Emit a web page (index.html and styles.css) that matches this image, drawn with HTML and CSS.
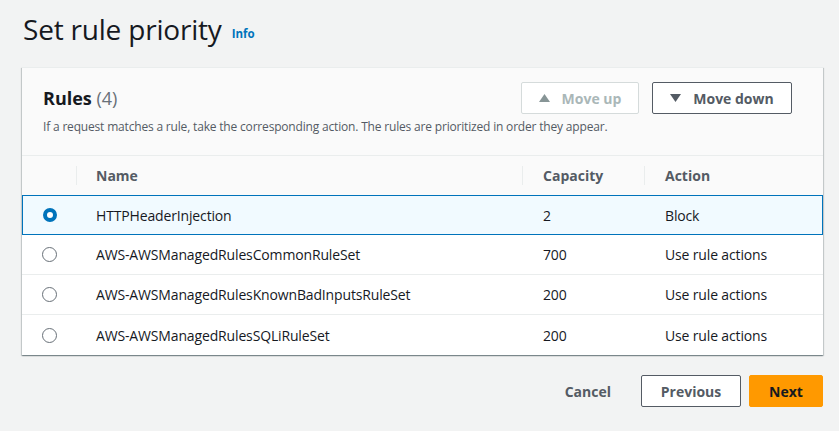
FILE: index.html
```html
<!DOCTYPE html>
<html>
<head>
<meta charset="utf-8">
<link rel="stylesheet" href="styles.css">
</head>
<body>
<div class="page">
  <div class="title-row">
    <h1 class="title">Set rule priority</h1>
    <a class="info">Info</a>
  </div>
  <div class="container">
    <div class="container-header">
      <div class="header-top">
        <h2 class="rules-title">Rules <span class="count">(4)</span></h2>
        <div class="actions">
          <button class="btn btn-disabled"><svg class="tri" width="11" height="8" viewBox="0 0 11 8"><path d="M5.5 0 L11 8 L0 8 Z" fill="currentColor"/></svg>Move up</button>
          <button class="btn btn-normal"><svg class="tri" width="11" height="8" viewBox="0 0 11 8"><path d="M0 0 L11 0 L5.5 8 Z" fill="currentColor"/></svg>Move down</button>
        </div>
      </div>
      <p class="desc">If a request matches a rule, take the corresponding action. The rules are prioritized in order they appear.</p>
    </div>
    <div class="table">
      <div class="row head">
        <div class="cell c-sel"></div>
        <div class="cell c-name sep">Name</div>
        <div class="cell c-cap sep">Capacity</div>
        <div class="cell c-act sep">Action</div>
      </div>
      <div class="row selected">
        <div class="cell c-sel"><span class="radio checked"></span></div>
        <div class="cell c-name">HTTPHeaderInjection</div>
        <div class="cell c-cap">2</div>
        <div class="cell c-act">Block</div>
      </div>
      <div class="row">
        <div class="cell c-sel"><span class="radio"></span></div>
        <div class="cell c-name">AWS-AWSManagedRulesCommonRuleSet</div>
        <div class="cell c-cap">700</div>
        <div class="cell c-act">Use rule actions</div>
      </div>
      <div class="row">
        <div class="cell c-sel"><span class="radio"></span></div>
        <div class="cell c-name">AWS-AWSManagedRulesKnownBadInputsRuleSet</div>
        <div class="cell c-cap">200</div>
        <div class="cell c-act">Use rule actions</div>
      </div>
      <div class="row last">
        <div class="cell c-sel"><span class="radio"></span></div>
        <div class="cell c-name">AWS-AWSManagedRulesSQLiRuleSet</div>
        <div class="cell c-cap">200</div>
        <div class="cell c-act">Use rule actions</div>
      </div>
    </div>
  </div>
  <div class="footer">
    <button class="link-btn">Cancel</button>
    <button class="btn btn-normal prev">Previous</button>
    <button class="btn btn-primary">Next</button>
  </div>
</div>
</body>
</html>
```

FILE: styles.css
```css
* { box-sizing: border-box; }
html, body {
  margin: 0;
  padding: 0;
  background: #f2f3f3;
  font-family: "Open Sans", "Noto Sans", sans-serif;
  color: #16191f;
}
.page {
  padding: 11px 16px 0 22px;
  width: 839px;
}
.title-row {
  display: flex;
  align-items: baseline;
  gap: 10px;
  height: 56px;
  padding-left: 1px;
}
.title {
  margin: 0;
  font-size: 28px;
  font-weight: 400;
  line-height: 36px;
  letter-spacing: -0.2px;
  color: #16191f;
}
.info {
  font-size: 11.5px;
  font-weight: 700;
  color: #0073bb;
  position: relative;
  top: -2px;
}
.container {
  background: #fff;
  box-shadow: 0 1px 1px 0 rgba(0,28,36,.3), 1px 1px 1px 0 rgba(0,28,36,.15), -1px 1px 1px 0 rgba(0,28,36,.15);
  border-top: 1px solid #eaeded;
}
.container-header {
  background: #fafafa;
  padding: 14px 31px 0 21px;
  height: 88px;
  border-bottom: 1px solid #eaeded;
}
.header-top {
  display: flex;
  justify-content: space-between;
  align-items: flex-start;
}
.rules-title {
  margin: 0;
  padding-top: 4px;
  font-size: 18px;
  font-weight: 700;
  line-height: 24px;
  color: #16191f;
}
.count {
  font-weight: 400;
  color: #687078;
}
.actions {
  display: flex;
  gap: 13px;
}
.btn {
  height: 32px;
  border-radius: 2px;
  font-family: inherit;
  font-size: 14px;
  font-weight: 700;
  background: #fff;
  display: inline-flex;
  align-items: center;
  justify-content: center;
  padding: 0 10px;
  white-space: nowrap;
}
.btn-disabled {
  border: 1px solid #d5dbdb;
  color: #aab7b8;
  width: 118px;
}
.btn-normal {
  border: 1px solid #545b64;
  color: #545b64;
  width: 140px;
}
.tri { margin-right: 12px; }
.btn-disabled .tri { color: #879596; }
.btn-normal .tri { color: #545b64; }
.desc {
  margin: 5px 0 0;
  font-size: 12px;
  line-height: 16px;
  color: #545b64;
  letter-spacing: -0.18px;
}
.table {
  background: #fff;
}
.row {
  display: flex;
  align-items: center;
  height: 40px;
  border-bottom: 1px solid #eaeded;
  font-size: 14px;
  color: #16191f;
  letter-spacing: -0.15px;
}
.row.last { border-bottom: none; }
.row.head {
  background: #fafafa;
  height: 39px;
  font-weight: 700;
  color: #545b64;
  border-bottom: none;
  letter-spacing: 0;
}
.row.selected {
  background: #f1faff;
  border: 1px solid #0073bb;
}
.cell {
  height: 100%;
  display: flex;
  align-items: center;
  position: relative;
}
.c-sel { width: 54px; justify-content: center; }
.c-name { width: 446px; padding-left: 20px; }
.c-cap { width: 122px; padding-left: 21px; }
.c-act { flex: 1; padding-left: 21px; }
.sep::before {
  content: "";
  position: absolute;
  left: 0;
  top: 10px;
  bottom: 10px;
  border-left: 1px solid #eaeded;
}
.row.selected .c-sel { width: 53px; }
.radio {
  width: 15px;
  height: 15px;
  border-radius: 50%;
  border: 1.5px solid #687078;
  background: #fff;
  display: inline-block;
}
.radio.checked {
  width: 14px;
  height: 14px;
  border: 4px solid #0073bb;
  background: #fff;
}
.footer {
  display: flex;
  justify-content: flex-end;
  align-items: center;
  gap: 8px;
  margin-top: 20px;
}
.link-btn {
  background: none;
  border: none;
  font-family: inherit;
  font-size: 14px;
  font-weight: 700;
  color: #545b64;
  padding: 0 20px;
  height: 32px;
  margin-right: 2px;
}
.prev { width: 100px; }
.btn-primary {
  background: #ff9900;
  border: 1px solid #ff9900;
  color: #16191f;
  width: 74px;
}
```
